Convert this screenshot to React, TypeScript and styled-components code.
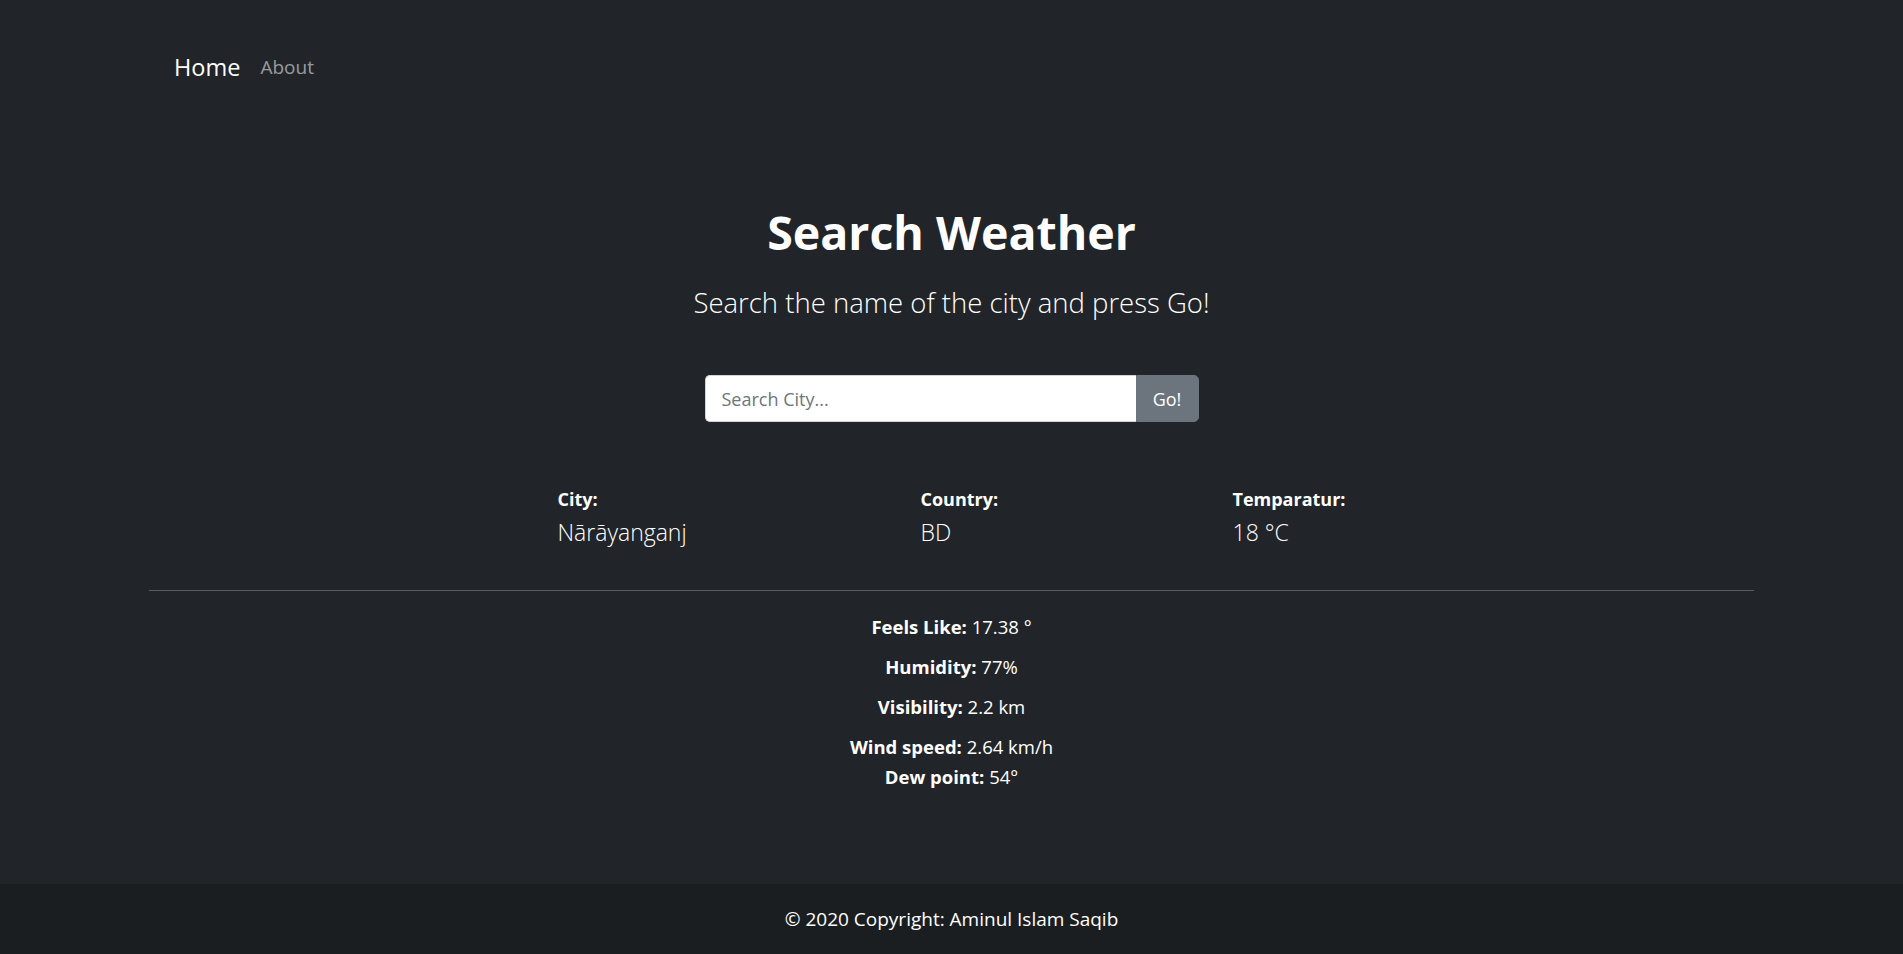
import React from "react";
import styled, { createGlobalStyle } from "styled-components";

const GlobalStyle = createGlobalStyle`
  html, body { margin: 0; padding: 0; }
  body {
    background: #212529;
    color: #ffffff;
    font-family: "Open Sans", "Noto Sans", Arial, sans-serif;
  }
  * { box-sizing: border-box; }
`;

const Page = styled.div`
  min-height: 954px;
  display: flex;
  flex-direction: column;
`;

const Container = styled.div`
  width: 1605px;
  margin: 0 auto;
  flex: 1;
  display: flex;
  flex-direction: column;
`;

const NavBar = styled.nav`
  display: flex;
  align-items: center;
  gap: 20px;
  padding: 43px 25px 0;
  height: 90px;
`;

const Brand = styled.a`
  font-size: 23.5px;
  font-weight: 500;
  line-height: 34px;
  color: #ffffff;
  text-decoration: none;
`;

const NavLink = styled.a`
  font-size: 19px;
  line-height: 34px;
  color: rgba(255, 255, 255, 0.55);
  text-decoration: none;
`;

const Hero = styled.section`
  display: flex;
  flex-direction: column;
  align-items: center;
  padding-top: 106px;
`;

const Title = styled.h1`
  margin: 0;
  font-size: 46.5px;
  font-weight: 700;
  line-height: 72px;
`;

const Subtitle = styled.p`
  margin: 0;
  font-size: 27.5px;
  font-weight: 300;
  line-height: 70px;
`;

const SearchForm = styled.form`
  display: flex;
  width: 494px;
  height: 47px;
  margin-top: 37px;
`;

const SearchInput = styled.input`
  flex: 1;
  min-width: 0;
  border: 1px solid #ced4da;
  border-right: none;
  border-radius: 5px 0 0 5px;
  background: #ffffff;
  padding: 0 16px;
  font-family: inherit;
  font-size: 18px;
  color: #212529;
  outline: none;
  &::placeholder { color: #6c757d; }
`;

const GoButton = styled.button`
  width: 63px;
  border: 1px solid #6c757d;
  border-radius: 0 5px 5px 0;
  background: #6c757d;
  color: #ffffff;
  font-family: inherit;
  font-size: 18px;
  cursor: pointer;
`;

const InfoRow = styled.div`
  display: grid;
  grid-template-columns: 363px 312px max-content;
  justify-content: center;
  margin-top: 64px;
`;

const InfoCell = styled.div`
  display: flex;
  flex-direction: column;
`;

const InfoLabel = styled.span`
  font-size: 18px;
  font-weight: 700;
  line-height: 26px;
`;

const InfoValue = styled.span`
  font-size: 23px;
  font-weight: 300;
  line-height: 40px;
`;

const Divider = styled.hr`
  width: 100%;
  margin: 38px 0 0;
  border: 0;
  border-top: 1px solid rgba(255, 255, 255, 0.25);
`;

const Details = styled.div`
  display: flex;
  flex-direction: column;
  align-items: center;
  padding-top: 21px;
`;

const DetailLine = styled.p<{ $tight?: boolean }>`
  margin: 0 0 ${(p) => (p.$tight ? "0" : "10px")};
  font-size: 18.5px;
  line-height: 30px;
`;

const Footer = styled.footer`
  height: 70px;
  background: #1b1e21;
  display: flex;
  align-items: center;
  justify-content: center;
  font-size: 19px;
`;

const details: { label: string; value: string; tight?: boolean }[] = [
  { label: "Feels Like:", value: "17.38 °" },
  { label: "Humidity:", value: "77%" },
  { label: "Visibility:", value: "2.2 km" },
  { label: "Wind speed:", value: "2.64 km/h", tight: true },
  { label: "Dew point:", value: "54°", tight: true },
];

export default function App() {
  return (
    <Page>
      <GlobalStyle />
      <Container>
        <NavBar>
          <Brand href="#">Home</Brand>
          <NavLink href="#">About</NavLink>
        </NavBar>
        <Hero>
          <Title>Search Weather</Title>
          <Subtitle>Search the name of the city and press Go!</Subtitle>
          <SearchForm onSubmit={(e) => e.preventDefault()}>
            <SearchInput placeholder="Search City..." />
            <GoButton type="submit">Go!</GoButton>
          </SearchForm>
        </Hero>
        <InfoRow>
          <InfoCell>
            <InfoLabel>City:</InfoLabel>
            <InfoValue>Nārāyanganj</InfoValue>
          </InfoCell>
          <InfoCell>
            <InfoLabel>Country:</InfoLabel>
            <InfoValue>BD</InfoValue>
          </InfoCell>
          <InfoCell>
            <InfoLabel>Temparatur:</InfoLabel>
            <InfoValue>18 °C</InfoValue>
          </InfoCell>
        </InfoRow>
        <Divider />
        <Details>
          {details.map((d) => (
            <DetailLine key={d.label} $tight={d.tight}>
              <strong>{d.label}</strong> {d.value}
            </DetailLine>
          ))}
        </Details>
      </Container>
      <Footer>© 2020 Copyright: Aminul Islam Saqib</Footer>
    </Page>
  );
}
